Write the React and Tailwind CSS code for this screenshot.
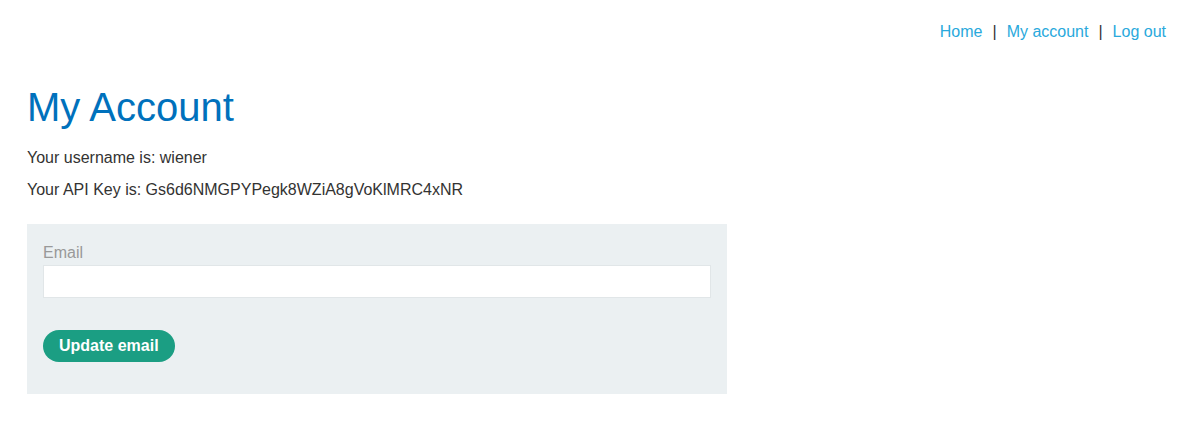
import React, { useState } from "react";

function App() {
  const [email, setEmail] = useState("");

  return (
    <div className="min-h-[422px] bg-white text-[16px] text-[#333332]" style={{ fontFamily: '"Liberation Sans", Arial, sans-serif' }}>
      <header className="flex justify-end pt-[23px] pr-[33px]">
        <nav className="flex items-center leading-[18px]">
          <a href="#" className="text-[#29a9dc]">Home</a>
          <span className="mx-[10px]">|</span>
          <a href="#" className="text-[#29a9dc]">My account</a>
          <span className="mx-[10px]">|</span>
          <a href="#" className="text-[#29a9dc]">Log out</a>
        </nav>
      </header>

      <div className="pl-[27px]">
        <h1 className="mt-[42px] text-[40px] leading-[48px] text-[#0071bc]">My Account</h1>
        <p className="mt-[18px] leading-[18px]">Your username is: wiener</p>
        <p className="mt-[14px] leading-[18px]">Your API Key is: Gs6d6NMGPYPegk8WZiA8gVoKlMRC4xNR</p>

        <form
          className="mt-[25px] flex w-[700px] flex-col bg-[#ebf0f2] px-[16px] pt-[20px] pb-[32px]"
          onSubmit={(e) => e.preventDefault()}
        >
          <label htmlFor="email" className="leading-[18px] text-[#999999]">Email</label>
          <input
            id="email"
            type="email"
            value={email}
            onChange={(e) => setEmail(e.target.value)}
            className="mt-[3px] h-[33px] w-[668px] border border-[#e1e6e8] bg-white px-2 outline-none"
          />
          <div className="mt-[32px]">
            <button
              type="submit"
              className="h-[32px] rounded-full bg-[#1b9e83] px-[16px] text-[16px] font-bold text-white"
            >
              Update email
            </button>
          </div>
        </form>
      </div>
    </div>
  );
}

export default App;
